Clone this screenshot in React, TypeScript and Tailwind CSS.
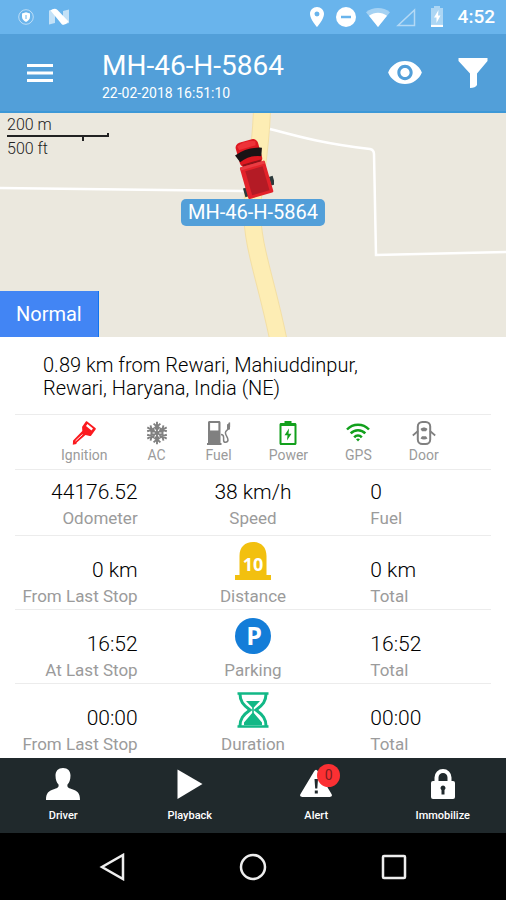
import type { ReactNode } from "react";

type Sensor = {
  label: string;
  color: string;
  icon: ReactNode;
};

type TripRow = {
  from: string;
  fromLabel: string;
  name: string;
  icon: ReactNode;
  total: string;
};

const sensors: Sensor[] = [
  { label: "Ignition", color: "text-[#fb1a1f]", icon: <KeyIcon /> },
  { label: "AC", color: "text-[#808080]", icon: <SnowIcon /> },
  { label: "Fuel", color: "text-[#808080]", icon: <PumpIcon /> },
  { label: "Power", color: "text-[#12a01c]", icon: <BatteryIcon /> },
  { label: "GPS", color: "text-[#12a01c]", icon: <SignalIcon /> },
  { label: "Door", color: "text-[#808080]", icon: <DoorIcon /> },
];

const trips: TripRow[] = [
  { from: "0 km", fromLabel: "From Last Stop", name: "Distance", icon: <MilestoneIcon />, total: "0 km" },
  { from: "16:52", fromLabel: "At Last Stop", name: "Parking", icon: <ParkingIcon />, total: "16:52" },
  { from: "00:00", fromLabel: "From Last Stop", name: "Duration", icon: <HourglassIcon />, total: "00:00" },
];

function KeyIcon() {
  return (
    <svg viewBox="0 0 24 24" className="size-6" fill="currentColor">
      <path
        fillRule="evenodd"
        d="M15.2.6 23.4 7c.5.4.6 1 .2 1.500l-4.400 6c-.3.500-.8.700-1.400.500l-4.300-1.100-8.700 7.500-.5 1.700-3.500.6.3-4.200L10.300 10l-.2-3.600c0-.5.100-.8.400-1.200L13.700.8c.4-.5 1-.6 1.500-.2Zm.2 2.500-1.400 1.900 5.500 4.400 1.500-2Z"
      />
      <path d="m3.500 20 7-6.500" stroke="#fff" strokeWidth=".9" />
    </svg>
  );
}

function SnowIcon() {
  return (
    <svg viewBox="0 0 24 24" className="size-6" fill="none" stroke="currentColor" strokeWidth="1.900">
      {[0, 60, 120, 180, 240, 300].map((a) => (
        <path key={a} transform={`rotate(${a} 12 12)`} d="M12 12V.8M8.600 2.600 12 5.800l3.400-3.200M9.400 6 12 8.600 14.600 6" />
      ))}
    </svg>
  );
}

function PumpIcon() {
  return (
    <svg viewBox="0 0 24 24" className="size-6">
      <path
        fill="currentColor"
        fillRule="evenodd"
        d="M2.500 0h9.500c.9 0 1.500.6 1.500 1.500V22h1v2H0v-2h1V1.500C1 .6 1.600 0 2.500 0Zm.6 2v7.500h8.300V2Z"
      />
      <path
        d="M14 13.500c2.200 0 2.600 1 2.600 3v2.700c0 2.800 4 2.800 4.400 0 .3-3-2.600-4.500-2.600-7.500 0-3 4-2.700 4-6V1.500"
        fill="none"
        stroke="currentColor"
        strokeWidth="1.500"
      />
      <path fill="currentColor" d="m20 3.500 3-2v7h-3Z" />
    </svg>
  );
}

function BatteryIcon() {
  return (
    <svg viewBox="0 0 24 24" className="size-6" fill="currentColor">
      <path
        fillRule="evenodd"
        d="M8.500 0h7v2H19c.8 0 1.500.7 1.500 1.500v19c0 .8-.7 1.500-1.500 1.500H5c-.8 0-1.500-.7-1.500-1.500v-19C3.500 2.700 4.200 2 5 2h3.500Zm-3 5v17h13V5Z"
      />
      <path d="M13 7.500 8.500 14.200h3L11 19.500l4.500-6.700h-3Z" />
    </svg>
  );
}

function SignalIcon() {
  return (
    <svg viewBox="0 0 24 24" className="size-6" fill="none" stroke="currentColor" strokeWidth="2.500">
      <path d="M1 8.500c6-6.300 16-6.300 22 0M4.700 12.400c4-4.200 10.600-4.200 14.600 0M8.200 16.300c2.100-2.300 5.500-2.300 7.600 0" />
      <path fill="currentColor" stroke="none" d="m12 20.500-2-2.200c1.200-1 2.800-1 4 0Z" />
    </svg>
  );
}

function DoorIcon() {
  return (
    <svg viewBox="0 0 24 24" className="size-6" fill="none" stroke="currentColor">
      <rect x="5.800" y="1" width="12.400" height="22" rx="4.500" strokeWidth="2" />
      <path strokeWidth="1.700" d="M6 10 .8 14.500M18 10l5.200 4.500" />
      <path fill="currentColor" stroke="none" d="M8.500 8c2-2 5-2 7 0l-1.500 2.200h-4ZM8.500 17.500 10 15.300h4l1.500 2.200c-2 1.400-5 1.400-7 0Z" />
    </svg>
  );
}

function MilestoneIcon() {
  return (
    <svg viewBox="0 0 36 38" className="h-[38px] w-9">
      <path fill="#f2c00f" d="M4.500 33V14C4.500 5 10 0 18 0s13.500 5 13.500 14v19H36v5H0v-5Z" />
      <text x="18" y="28.500" textAnchor="middle" fill="#fff" className="font-['Open_Sans',sans-serif] text-[18px] font-bold">
        10
      </text>
    </svg>
  );
}

function ParkingIcon() {
  return (
    <svg viewBox="0 0 36 36" className="size-9">
      <circle cx="18" cy="18" r="18" fill="#147dd8" />
      <text x="19" y="27" textAnchor="middle" fill="#fff" className="font-['Open_Sans',sans-serif] text-[25px] font-bold">
        P
      </text>
    </svg>
  );
}

function HourglassIcon() {
  return (
    <svg viewBox="0 0 36 36" className="size-9">
      <path stroke="#12b886" strokeWidth="2.500" d="M2.500 1.500h31M2.500 34.500h31" />
      <path
        fill="none"
        stroke="#12b886"
        strokeWidth="3"
        d="M5 2c0 7 3 11 10 16-7 5-10 9-10 16M31 2c0 7-3 11-10 16 7 5 10 9 10 16"
      />
      <path fill="#12b886" d="M11 9h14L18.800 15.500v5.500L27 30.500V33H9v-2.500l8.200-9.500v-5.500Z" />
    </svg>
  );
}

function Truck() {
  return (
    <svg viewBox="0 0 42 60" className="h-15 w-[42px]">
      <g transform="rotate(-16 21 30)">
        <path fill="#2c3a3c" d="M6 46h4v9H6ZM34 42h4v9h-4Z" />
        <rect x="10" y="1" width="23" height="25" rx="5" fill="#dd1820" />
        <path fill="#ee3238" d="M12 4Q21.500 0 31 4L30 8H13Z" />
        <path fill="#1a1315" d="M7.500 12Q21.500 7 35.500 12L32.500 20Q21.500 15.500 10.500 20Z" />
        <path fill="#8f1219" d="M12 23h19v3H12Z" />
        <rect x="8.500" y="25" width="26" height="33" rx="1.500" fill="#e3222a" />
        <rect x="13" y="30" width="18" height="25" fill="#b41b25" />
        <path fill="#ea3b42" d="M9 25h25v3H9Z" />
      </g>
    </svg>
  );
}

function StatusBar() {
  return (
    <div className="flex h-[34px] items-center bg-[#69b4ec] px-[11px] text-white">
      <svg viewBox="0 0 16 16" className="ml-[7px] size-4">
        <circle cx="8" cy="8" r="7.300" fill="none" stroke="currentColor" opacity=".55" />
        <path fill="currentColor" d="M8 3.200 12 4.500v3.300c0 2.400-1.700 4.200-4 5.100-2.300-.9-4-2.700-4-5.100V4.500Z" />
        <path fill="none" stroke="#69b4ec" d="M8 6v4" />
      </svg>
      <svg viewBox="0 0 22 18" className="ml-[14px] h-[18px] w-[22px]" fill="currentColor">
        <path opacity=".6" d="M1 2.500 7 1v14l-6 1.500ZM15 3l6-1.500V15l-6 1.500Z" />
        <path d="M2.500 2.500Q6.500-.5 9.500 2L20.500 13.500q-3 4-6.500 3Z" />
      </svg>
      <div className="ml-auto flex items-center">
        <svg viewBox="5 2 14 20" className="h-5 w-[14px]" fill="currentColor">
          <path d="M12 2C8.130 2 5 5.130 5 9c0 5.250 7 13 7 13s7-7.750 7-13c0-3.870-3.130-7-7-7zm0 9.500a2.500 2.500 0 0 1 0-5 2.500 2.500 0 0 1 0 5z" />
        </svg>
        <svg viewBox="0 0 20 20" className="ml-3 size-5">
          <circle cx="10" cy="10" r="10" fill="currentColor" />
          <path stroke="#69b4ec" strokeWidth="2.500" d="M5 10h10" />
        </svg>
        <svg viewBox="0 0 24 19" className="ml-[10px] h-[19px] w-6" fill="currentColor">
          <path opacity=".4" d="M12 19 0 4.200C7-1.400 17-1.400 24 4.200Z" />
          <path d="M12 19 3 7.800c5.500-4 12.500-4 18 0Z" />
        </svg>
        <svg viewBox="0 0 20 19" className="ml-[6px] h-[19px] w-5" fill="none" stroke="currentColor" opacity=".5">
          <path strokeWidth="1.500" d="M18.500 2v15.500H2Z" />
        </svg>
        <svg viewBox="0 0 14 22" className="ml-[14px] h-[22px] w-[14px]" fill="currentColor">
          <path opacity=".45" d="M4 0h6v2h3v16H1V2h3Z" />
          <path d="M8.500 4 4 11.500h2.500V17L10.500 9.500H8ZM1 18.500h12V21H1Z" />
        </svg>
        <span className="ml-[14px] text-[19px] font-medium">4:52</span>
      </div>
    </div>
  );
}

function Header() {
  return (
    <header className="flex h-[79px] items-center border-b-2 border-[#3d98d7] bg-[#529fd9] pr-[18px] pl-[27px] text-white">
      <button aria-label="Menu">
        <svg viewBox="0 0 26 18" className="h-[18px] w-[26px]" stroke="currentColor" strokeWidth="3">
          <path d="M0 1.500h26M0 9h26M0 16.500h26" />
        </svg>
      </button>
      <div className="ml-[49px] pt-2">
        <h1 className="text-[28px] leading-8">MH-46-H-5864</h1>
        <p className="text-[14px] leading-[22px]">22-02-2018 16:51:10</p>
      </div>
      <button aria-label="Show vehicle" className="ml-auto">
        <svg viewBox="1 4.500 22 15" className="h-[23px] w-[34px]" fill="currentColor">
          <path d="M12 4.500C7 4.500 2.730 7.610 1 12c1.730 4.390 6 7.500 11 7.500s9.270-3.110 11-7.500c-1.730-4.390-6-7.500-11-7.500zM12 17c-2.760 0-5-2.240-5-5s2.240-5 5-5 5 2.240 5 5-2.240 5-5 5zm0-8c-1.660 0-3 1.340-3 3s1.340 3 3 3 3-1.340 3-3-1.340-3-3-3z" />
        </svg>
      </button>
      <button aria-label="Filter" className="ml-9">
        <svg viewBox="0 0 30 30" className="size-[30px]" fill="currentColor">
          <path d="M.5 0h29v3L19 15.500v11.500Q17.500 30 12 30V15.500L.5 3Z" />
        </svg>
      </button>
    </header>
  );
}

function MapView() {
  return (
    <section className="relative h-56 overflow-hidden bg-[#ebe8de]">
      <svg viewBox="0 0 506 224" preserveAspectRatio="xMidYMid slice" className="h-full w-full" fill="none">
        <path
          stroke="#f3dfa5"
          strokeWidth="18"
          d="M262-5C261 40 254 65 252 95c0 40 14 70 27 135"
        />
        <path
          stroke="#fdedb4"
          strokeWidth="16"
          d="M262-5C261 40 254 65 252 95c0 40 14 70 27 135"
        />
        <path stroke="#fff" strokeWidth="2.500" d="M0 75 245 78M270 16C300 24 325 31 370 36q4 1 4 5l2 101 130-3" />
      </svg>

      {/* Scale */}
      <div className="absolute top-1 left-[7px] text-[16px] font-light text-[#222]">
        <p className="leading-4">200 m</p>
        <svg viewBox="0 0 102 8" className="h-2 w-[102px]" fill="none" stroke="#222">
          <path strokeWidth="2" d="M0 3h101V-1M76 3v5" />
        </svg>
        <p className="leading-4">500 ft</p>
      </div>

      {/* Vehicle marker */}
      <div className="absolute top-[26px] left-1/2 flex -translate-x-1/2 flex-col items-center">
        <Truck />
        <span className="rounded-[5px] bg-[#529fd9] px-[7px] text-[20px] leading-[27px] whitespace-nowrap text-white">
          MH-46-H-5864
        </span>
      </div>

      <button className="absolute bottom-0 left-0 h-[46px] border-r border-[#1173f0] bg-[#4285f4] px-4 text-[20px] text-white">
        Normal
      </button>
    </section>
  );
}

function Stat({ value, label, className }: { value: ReactNode; label: string; className: string }) {
  return (
    <div className={className}>
      <div className="text-[21px] leading-7 font-light text-black">{value}</div>
      <div className="text-[17px] leading-6 text-[#9b9b9b]">{label}</div>
    </div>
  );
}

function Details() {
  return (
    <main className="px-[15px]">
      <p className="px-7 pt-[17px] pb-[14px] text-[20px] leading-[23px] font-light text-black">
        0.89 km from Rewari, Mahiuddinpur,
        <br />
        Rewari, Haryana, India (NE)
      </p>

      <ul className="flex h-14 gap-[37px] border-y border-[#ececec] pt-[6px] pl-[46px]">
        {sensors.map((s) => (
          <li key={s.label} className="flex flex-col items-center">
            <span className={s.color}>{s.icon}</span>
            <span className="text-[14px] leading-5 text-[#9b9b9b]">{s.label}</span>
          </li>
        ))}
      </ul>

      <div className="grid grid-cols-3 border-b border-[#ececec] pt-2 pb-[5px]">
        <Stat value="44176.52" label="Odometer" className="pr-9 text-right" />
        <Stat value="38 km/h" label="Speed" className="text-center" />
        <Stat value="0" label="Fuel" className="pl-[38px]" />
      </div>

      {trips.map((t) => (
        <div key={t.name} className="grid h-[74px] grid-cols-3 items-end border-b border-[#ececec] pb-px last:border-white">
          <Stat value={t.from} label={t.fromLabel} className="pr-9 text-right" />
          <div className="flex flex-col items-center gap-1">
            {t.icon}
            <div className="text-[17px] leading-6 text-[#9b9b9b]">{t.name}</div>
          </div>
          <Stat value={t.total} label="Total" className="pl-[38px]" />
        </div>
      ))}
    </main>
  );
}

function BottomNav() {
  const item = "flex flex-col items-center gap-[6px] pt-[10px] text-[11px] font-medium leading-5";
  return (
    <nav className="grid h-[75px] grid-cols-4 bg-[#20292c] text-white">
      <button className={item}>
        <svg viewBox="0 0 36 32" className="h-8 w-9" fill="currentColor">
          <path d="M18 0c4.800 0 7.500 3 7.500 7.500 0 4.500-1.300 7-3 9-.5 2.200.5 3.500 4 4.500 6 1.800 8.500 4 8.500 11H1c0-7 2.500-9.200 8.500-11 3.500-1 4.500-2.300 4-4.500-1.700-2-3-4.500-3-9C10.500 3 13.200 0 18 0Z" />
        </svg>
        Driver
      </button>
      <button className={item}>
        <svg viewBox="0 0 26 32" className="h-8 w-[26px]" fill="currentColor">
          <path d="M.5 1.500 25.500 16 .5 31Z" />
        </svg>
        Playback
      </button>
      <button className={item}>
        <span className="relative">
          <svg viewBox="0 0 32 32" className="size-8">
            <path fill="currentColor" d="M14 3.500q2-3.500 4 0L31.500 26q1.500 3-2 3h-27q-3.500 0-2-3Z" />
            <path fill="#20292c" d="M14.500 11h3.500l-.7 9.500h-2.100ZM14.800 22.500h3v3h-3Z" />
          </svg>
          <span className="absolute -top-1 -right-2 size-[23px] rounded-full bg-[#fb3033] text-center text-[14px] leading-[23px] font-normal text-[#7c1d1f]">
            0
          </span>
        </span>
        Alert
      </button>
      <button className={item}>
        <svg viewBox="0 0 24 32" className="h-8 w-6">
          <path fill="none" stroke="currentColor" strokeWidth="4" d="M5.500 14V9.500a6.500 6.500 0 0 1 13 0V14" />
          <rect y="13" width="24" height="18" rx="2" fill="currentColor" />
          <path fill="#20292c" d="M12 17.500a2.500 2.500 0 0 1 1.500 4.500v4.500h-3V22A2.500 2.500 0 0 1 12 17.500Z" />
        </svg>
        Immobilize
      </button>
    </nav>
  );
}

function SystemNav() {
  return (
    <div className="flex h-[67px] items-center justify-center gap-28 bg-black text-[#eee]">
      <button aria-label="Back">
        <svg viewBox="0 0 28 28" className="size-7" fill="none" stroke="currentColor" strokeWidth="2.500">
          <path d="M24 2v24L3 14Z" />
        </svg>
      </button>
      <button aria-label="Home">
        <svg viewBox="0 0 28 28" className="size-7" fill="none" stroke="currentColor" strokeWidth="2.500">
          <circle cx="14" cy="14" r="12" />
        </svg>
      </button>
      <button aria-label="Recent apps">
        <svg viewBox="0 0 28 28" className="size-7" fill="none" stroke="currentColor" strokeWidth="2.500">
          <rect x="4" y="3" width="22" height="22" rx="1" />
        </svg>
      </button>
    </div>
  );
}

export default function App() {
  return (
    <div className="bg-white font-[Roboto,sans-serif]">
      <StatusBar />
      <Header />
      <MapView />
      <Details />
      <BottomNav />
      <SystemNav />
    </div>
  );
}
